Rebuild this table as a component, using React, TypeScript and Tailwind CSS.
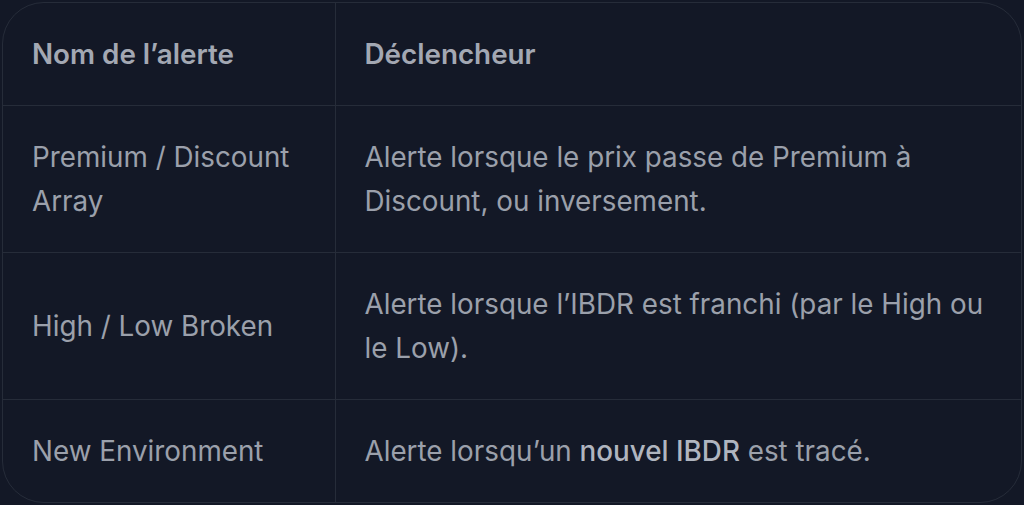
import React from 'react'

interface AlertRow {
  name: string
  trigger: React.ReactNode
}

const rows: AlertRow[] = [
  {
    name: 'Premium / Discount Array',
    trigger: 'Alerte lorsque le prix passe de Premium à Discount, ou inversement.',
  },
  {
    name: 'High / Low Broken',
    trigger: 'Alerte lorsque l’IBDR est franchi (par le High ou le Low).',
  },
  {
    name: 'New Environment',
    trigger: (
      <>
        Alerte lorsqu’un <strong className="font-medium text-[#b0b5bf]">nouvel IBDR</strong> est tracé.
      </>
    ),
  },
]

export default function App() {
  return (
    <div className="min-h-[505px] w-[1024px] bg-[#131826] p-[2px] font-['Inter','Liberation_Sans',sans-serif]">
      <div className="overflow-hidden rounded-[42px] border border-[#262c39]">
        <table className="w-full border-collapse text-left text-[27.8px] leading-[44px] text-[#9ba0ab]">
          <thead>
            <tr className="border-b border-[#262c39]">
              <th className="w-[332px] border-r border-[#262c39] px-[29px] py-[29px] font-semibold text-[#a3a8b3]">
                Nom de l’alerte
              </th>
              <th className="px-[29px] py-[29px] font-semibold text-[#a3a8b3]">Déclencheur</th>
            </tr>
          </thead>
          <tbody>
            {rows.map((row, i) => (
              <tr key={row.name} className={i < rows.length - 1 ? 'border-b border-[#262c39]' : ''}>
                <td className="border-r border-[#262c39] px-[29px] py-[29px] align-middle">{row.name}</td>
                <td className="px-[29px] py-[29px] align-middle">{row.trigger}</td>
              </tr>
            ))}
          </tbody>
        </table>
      </div>
    </div>
  )
}
